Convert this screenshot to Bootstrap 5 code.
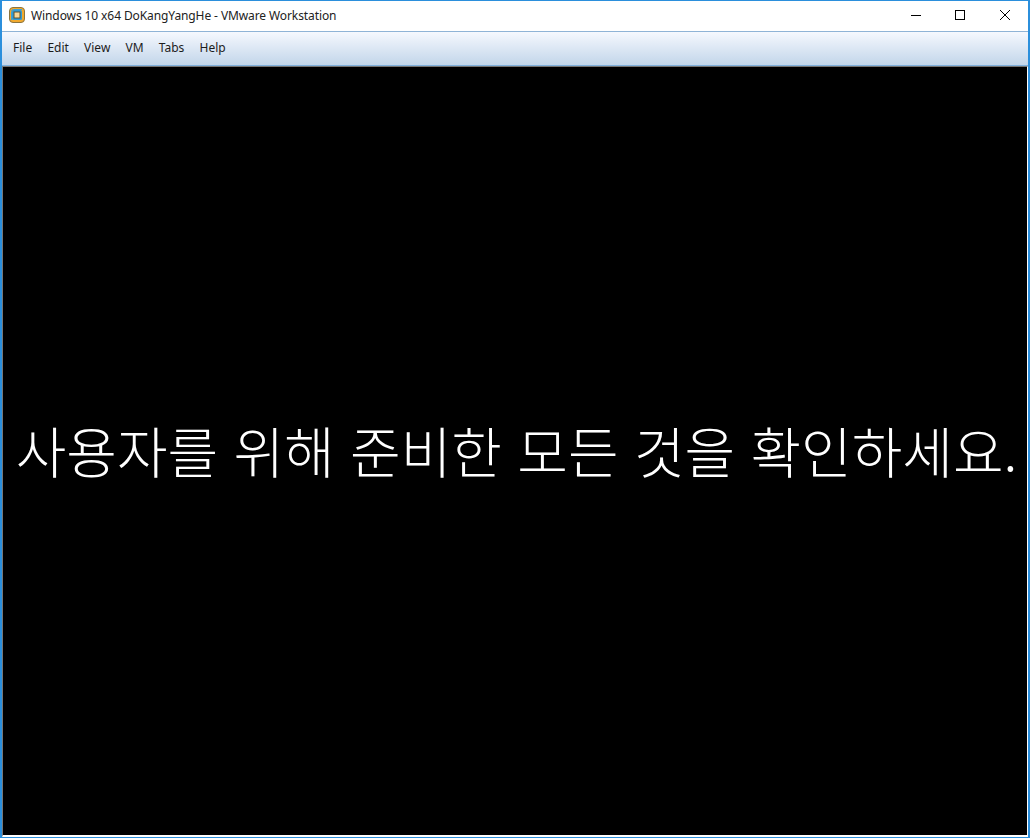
<!DOCTYPE html>
<html lang="ko">
<head>
<meta charset="utf-8">
<title>Windows 10 x64 DoKangYangHe - VMware Workstation</title>
<link href="https://cdn.jsdelivr.net/npm/bootstrap@5.3.0/dist/css/bootstrap.min.css" rel="stylesheet">
<style>
html,body{height:100%;margin:0;background:#fff;}
.vm-window{width:1030px;height:838px;border:solid #2b8fdc;border-width:1px 2px 1px 2px;background:#fff;overflow:hidden;}
.vm-title{height:30px;padding-bottom:2px;background:#fff;font:12px "Noto Sans","Liberation Sans",sans-serif;letter-spacing:-.1px;color:#222;}
.vm-icon{margin-left:7px;margin-right:6px;}
.vm-caption{width:46px;height:28px;}
.vm-caption-min{margin-right:-1px;padding-left:2px;}
.vm-caption-max{margin-right:-1px;}
.vm-menubar{height:35px;padding-bottom:2px;background:linear-gradient(#f5f8fe,#c3d6ea);border-top:1px solid #8fb3d6;border-bottom:1px solid #7fb0dc;font:12px "Noto Sans","Liberation Sans",sans-serif;color:#1c1c1c;padding-left:11px;gap:15.2px;}
.vm-screen{background:#000;border-top:1px solid #777;border-left:1px solid #777;border-right:1px solid #fff;border-bottom:2px solid #fff;padding:0 0 3px 3px;}
.vm-message{color:#fff;font-family:"Noto Sans CJK KR",sans-serif;font-weight:300;font-size:55px;line-height:1;white-space:nowrap;}
</style>
</head>
<body>
<div class="vm-window d-flex flex-column">
  <div class="vm-title d-flex align-items-center flex-shrink-0">
    <svg class="vm-icon" width="16" height="16" viewBox="0 0 16 16"><rect x=".5" y=".5" width="15" height="15" rx="3.5" fill="#f2a92c" stroke="#8a7440"/><path d="M2.5 13V4.5a2 2 0 0 1 2-2H13" fill="none" stroke="#3aa0d8" stroke-width="1"/><rect x="3" y="3" width="10" height="10" rx="1.5" fill="#2f9bd8"/><rect x="5" y="5" width="6" height="6" fill="#f6d79a" stroke="#5e5230"/></svg>
    <span class="flex-grow-1">Windows 10 x64 DoKangYangHe - VMware Workstation</span>
    <div class="vm-caption vm-caption-min d-flex align-items-center justify-content-center"><svg width="10" height="10" viewBox="0 0 10 10"><path d="M0 5.5H10" stroke="#000"/></svg></div>
    <div class="vm-caption vm-caption-max d-flex align-items-center justify-content-center"><svg width="10" height="10" viewBox="0 0 10 10"><rect x=".5" y=".5" width="9" height="9" fill="none" stroke="#000"/></svg></div>
    <div class="vm-caption d-flex align-items-center justify-content-center"><svg width="10" height="10" viewBox="0 0 10 10"><path d="M0 0L10 10M10 0L0 10" stroke="#000"/></svg></div>
  </div>
  <div class="vm-menubar d-flex align-items-center flex-shrink-0">
    <span>File</span><span>Edit</span><span>View</span><span>VM</span><span>Tabs</span><span>Help</span>
  </div>
  <div class="vm-screen flex-grow-1 d-flex align-items-center justify-content-center">
    <div class="vm-message">사용자를 위해 준비한 모든 것을 확인하세요.</div>
  </div>
</div>
</body>
</html>
